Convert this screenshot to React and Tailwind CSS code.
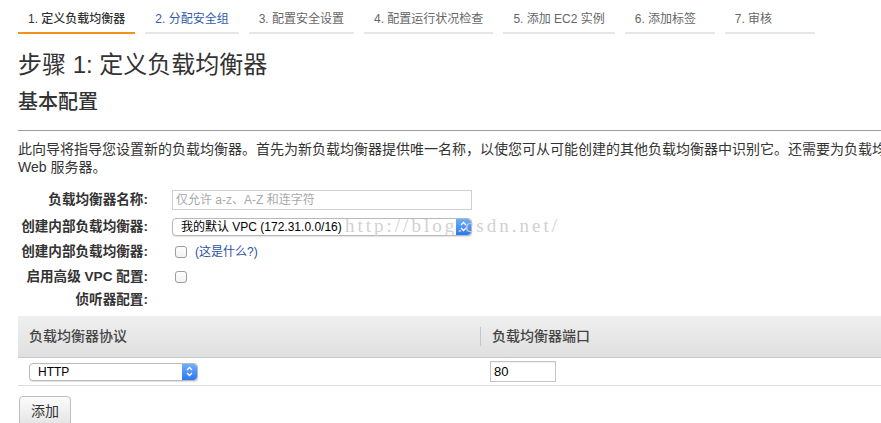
const tabs = [
  { label: "1. 定义负载均衡器", state: "active" },
  { label: "2. 分配安全组", state: "next" },
  { label: "3. 配置安全设置" },
  { label: "4. 配置运行状况检查" },
  { label: "5. 添加 EC2 实例" },
  { label: "6. 添加标签" },
  { label: "7. 审核" },
];

// Mac style select arrow (blue pill with up/down chevrons)
const SelectArrow = () => (
  <span className="flex h-full w-[15px] items-center justify-center rounded-r-[4px] bg-gradient-to-b from-[#6eaefc] to-[#2b78f0]">
    <svg width="7" height="11" viewBox="0 0 7 11" fill="none" stroke="white" strokeWidth="1.3">
      <path d="M1 4 L3.5 1.5 L6 4" />
      <path d="M1 7 L3.5 9.5 L6 7" />
    </svg>
  </span>
);

const MacSelect = ({ value, className }) => (
  <div
    className={`flex h-[18px] items-stretch rounded-[4px] border border-[#b9b9b9] bg-white shadow-[0_1px_1px_rgba(0,0,0,0.12)] ${className}`}
  >
    <span className="flex-1 truncate pl-[8px] text-[12px] leading-[16px] text-black">{value}</span>
    <SelectArrow />
  </div>
);

const Checkbox = () => (
  <span className="ml-[3px] block h-[12px] w-[12px] rounded-[3px] border border-[#9d9d9d] bg-gradient-to-b from-white to-[#f1f1f1]" />
);

const FormRow = ({ label, h, children }) => (
  <div className={`flex items-center ${h}`}>
    <div className="flex w-[130px] justify-end">
      <span className="whitespace-nowrap text-[13.6px] font-bold leading-[18px] text-[#333]">{label}</span>
    </div>
    <div className="ml-[24px] flex items-center">{children}</div>
  </div>
);

export default function App() {
  return (
    <div className="relative h-[423px] w-[881px] overflow-hidden bg-white pl-[18px] font-['Liberation_Sans','Noto_Sans_CJK_SC',sans-serif] text-[#333]">
      {/* Wizard steps */}
      <div className="flex gap-[10px] pt-[11px]">
        {tabs.map((t) => (
          <div key={t.label} className="min-w-[90px]">
            <div
              className={`px-[10px] text-[12px] leading-[16px] whitespace-nowrap ${
                t.state === "active"
                  ? "font-medium text-[#333]"
                  : t.state === "next"
                  ? "text-[#2f5ca8]"
                  : "text-[#666]"
              }`}
            >
              {t.label}
            </div>
            <div className={`mt-[5px] h-[2px] ${t.state === "active" ? "bg-[#f0941c]" : "bg-[#e7e7e7]"}`} />
          </div>
        ))}
      </div>

      <h1 className="mt-[19px] text-[24px] leading-[24px] text-[#333]">步骤 1: 定义负载均衡器</h1>
      <h2 className="mt-[15px] text-[20px] font-medium leading-[20px] text-[#333]">基本配置</h2>

      <div className="mt-[18px] border-t border-[#9c9c9c]" />

      <div className="mt-[9px] text-[14px] leading-[18px] text-[#333]">
        <div className="overflow-hidden whitespace-nowrap">
          此向导将指导您设置新的负载均衡器。首先为新负载均衡器提供唯一名称，以使您可从可能创建的其他负载均衡器中识别它。还需要为负载均
        </div>
        <div>Web 服务器。</div>
      </div>

      {/* Basic form */}
      <div className="mt-[11px]">
        <FormRow label="负载均衡器名称:" h="h-[26px]">
          <div className="flex h-[20px] w-[300px] items-center border border-[#cfcfcf] pl-[3px] text-[12px] text-[#a9a9a9]">
            仅允许 a-z、A-Z 和连字符
          </div>
        </FormRow>
        <FormRow label="创建内部负载均衡器:" h="h-[27px]">
          <MacSelect value="我的默认 VPC (172.31.0.0/16)" className="w-[300px]" />
        </FormRow>
        <FormRow label="创建内部负载均衡器:" h="h-[24px]">
          <Checkbox />
          <a className="ml-[8px] text-[12px] leading-[16px] text-[#2c4fa6]">(这是什么?)</a>
        </FormRow>
        <FormRow label="启用高级 VPC 配置:" h="h-[25px]">
          <Checkbox />
        </FormRow>
        <FormRow label="侦听器配置:" h="h-[22px]" />
      </div>

      {/* Listener table */}
      <div className="mt-[5px] w-[863px]">
        <div className="flex h-[42px] border-b border-[#c9c9c9] bg-gradient-to-b from-[#efefef] to-[#e0e0e0] text-[14px] font-medium text-[#444]">
          <div className="flex w-[462px] items-center pl-[11px]">负载均衡器协议</div>
          <div className="flex items-center">
            <span className="h-[19px] w-px bg-[#c6c6c6]" />
            <span className="ml-[11px]">负载均衡器端口</span>
          </div>
        </div>
        <div className="flex h-[28px] items-center border-b border-[#dcdcdc]">
          <div className="w-[462px] pl-[11px]">
            <MacSelect value="HTTP" className="w-[169px]" />
          </div>
          <div className="pl-[10px]">
            <div className="flex h-[21px] w-[66px] items-center border border-[#c4c4c4] pl-[3px] text-[13px] text-black shadow-[inset_0_1px_1px_rgba(0,0,0,0.06)]">
              80
            </div>
          </div>
        </div>
      </div>

      <button className="ml-[1px] mt-[10px] flex h-[30px] items-center rounded-[4px] border border-[#bdbdbd] bg-gradient-to-b from-[#fbfbfb] to-[#e4e4e4] px-[11px] text-[14px] text-[#333]">
        添加
      </button>

      {/* blog watermark */}
      <div className="pointer-events-none absolute left-[345px] top-[217px] font-['Liberation_Serif',serif] text-[19px] leading-[18px] tracking-[3px] text-[#cdcdcd] opacity-90">
        http://blog.csdn.net/
      </div>
    </div>
  );
}
